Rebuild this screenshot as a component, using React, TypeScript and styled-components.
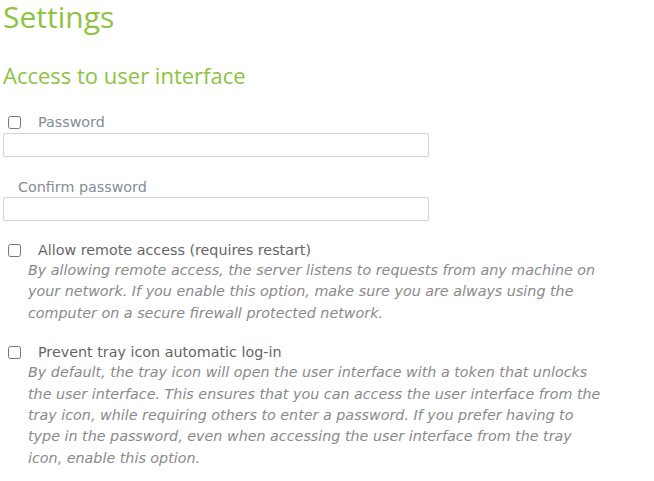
import React from 'react'
import styled, { createGlobalStyle } from 'styled-components'

const GlobalStyle = createGlobalStyle`
  html, body {
    margin: 0;
    padding: 0;
    background: #fff;
  }
  body {
    font-family: 'DejaVu Sans', 'Noto Sans', sans-serif;
  }
`

const StyledPage = styled.div`
  padding: 0 3px;
  width: 654px;
  box-sizing: border-box;
`

const StyledTitle = styled.h1`
  margin: 0;
  font-family: 'Open Sans', 'Noto Sans', sans-serif;
  font-size: 30px;
  line-height: 34px;
  font-weight: 400;
  color: #8cc43f;
`

const StyledSectionTitle = styled.h2`
  margin: 28px 0 0;
  font-family: 'Open Sans', 'Noto Sans', sans-serif;
  font-size: 22px;
  line-height: 26px;
  font-weight: 400;
  color: #8cc43f;
`

const StyledCheckRow = styled.label<{ muted?: boolean }>`
  display: flex;
  align-items: center;
  height: 20px;
  cursor: pointer;
  input {
    width: 13px;
    height: 13px;
    margin: 0 17px 0 5px;
  }
  span {
    font-size: 14.3px;
    line-height: 20px;
    color: ${props => (props.muted ? '#848c99' : '#666')};
  }
`

const StyledFieldLabel = styled.div`
  padding-left: 15px;
  font-size: 14.3px;
  line-height: 20px;
  color: #848c99;
`

const StyledInput = styled.input`
  display: block;
  box-sizing: border-box;
  width: 426px;
  height: 24px;
  margin: 0;
  border: 1px solid #d2d2d2;
  border-radius: 2px;
  background: #fff;
  outline: none;
`

const StyledBlock = styled.div<{ gap: number }>`
  margin-top: ${props => props.gap}px;
`

const StyledHelp = styled.p`
  margin: 0;
  padding-left: 25px;
  font-style: italic;
  font-size: 14.3px;
  line-height: 21.4px;
  white-space: nowrap;
  color: #8a8a8a;
`

const App: React.FC = () => {
  return (
    <StyledPage>
      <GlobalStyle />
      <StyledTitle>Settings</StyledTitle>
      <StyledSectionTitle>Access to user interface</StyledSectionTitle>

      <StyledBlock gap={24}>
        <StyledCheckRow muted>
          <input type="checkbox" />
          <span>Password</span>
        </StyledCheckRow>
        <StyledBlock gap={1}>
          <StyledInput type="password" />
        </StyledBlock>
      </StyledBlock>

      <StyledBlock gap={20}>
        <StyledFieldLabel>Confirm password</StyledFieldLabel>
        <StyledInput type="password" />
      </StyledBlock>

      <StyledBlock gap={19}>
        <StyledCheckRow>
          <input type="checkbox" />
          <span>Allow remote access (requires restart)</span>
        </StyledCheckRow>
        <StyledHelp>
          By allowing remote access, the server listens to requests from any machine on
          <br />
          your network. If you enable this option, make sure you are always using the
          <br />
          computer on a secure firewall protected network.
        </StyledHelp>
      </StyledBlock>

      <StyledBlock gap={18}>
        <StyledCheckRow>
          <input type="checkbox" />
          <span>Prevent tray icon automatic log-in</span>
        </StyledCheckRow>
        <StyledHelp>
          By default, the tray icon will open the user interface with a token that unlocks
          <br />
          the user interface. This ensures that you can access the user interface from the
          <br />
          tray icon, while requiring others to enter a password. If you prefer having to
          <br />
          type in the password, even when accessing the user interface from the tray
          <br />
          icon, enable this option.
        </StyledHelp>
      </StyledBlock>
    </StyledPage>
  )
}

export default App
